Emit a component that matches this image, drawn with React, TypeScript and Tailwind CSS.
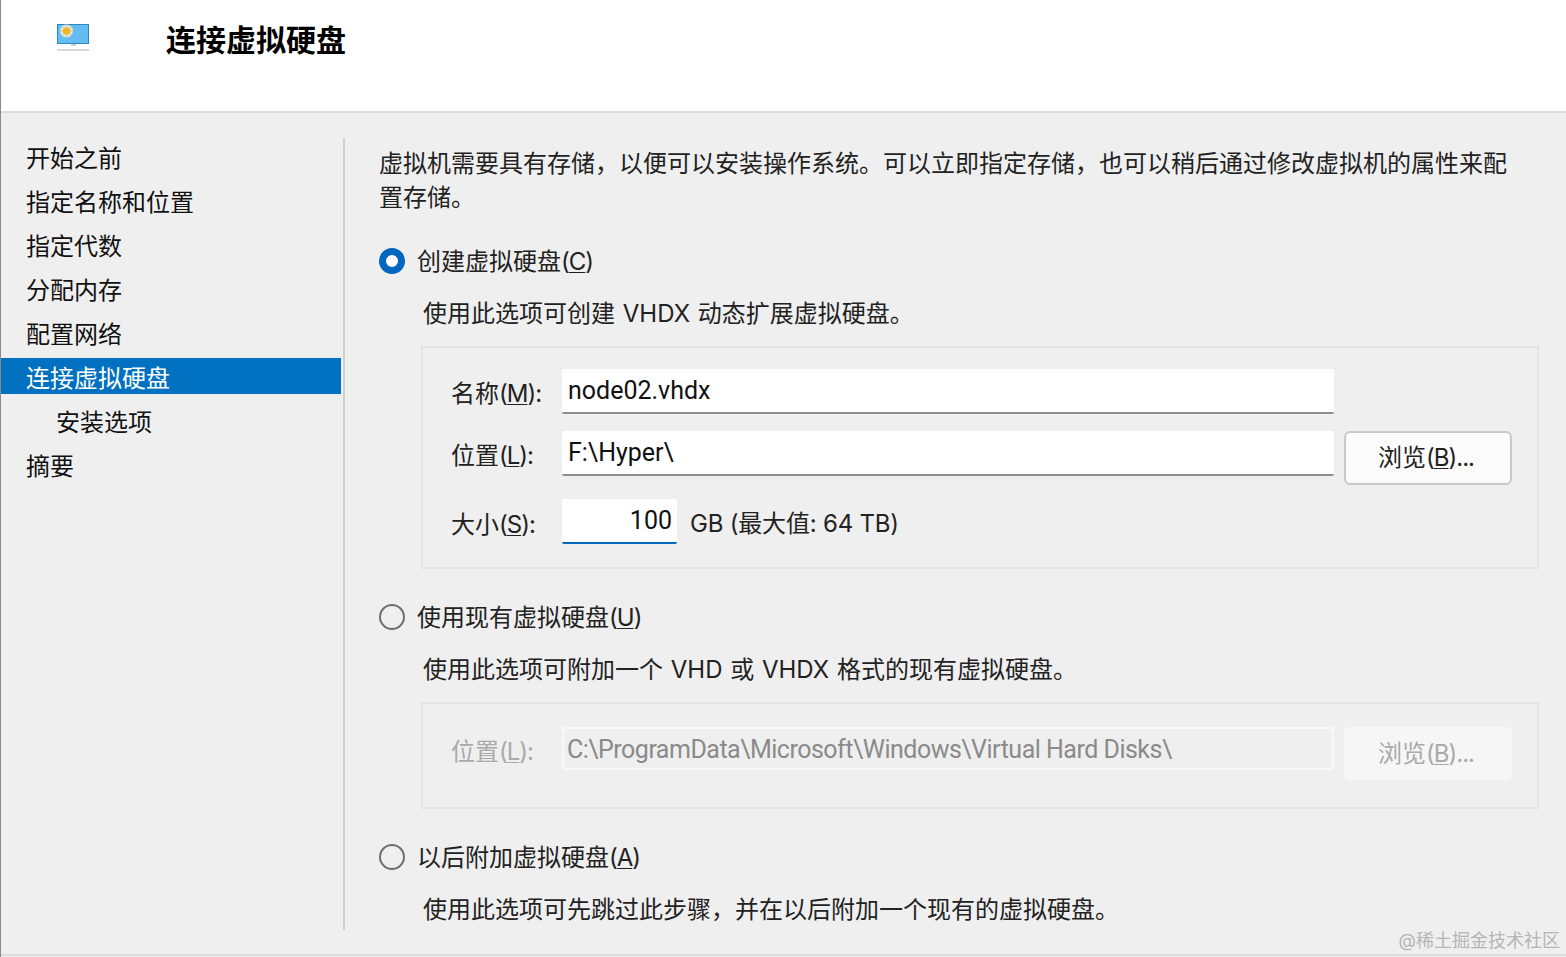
import React from "react";

const font = { fontFamily: '"Inter","Noto Sans CJK SC",sans-serif' };
const inputFont = { fontFamily: '"Roboto","Noto Sans CJK SC",sans-serif' };

function Radio({ on }: { on?: boolean }) {
  return on ? (
    <span className="block w-[26px] h-[26px] shrink-0 rounded-full border-[7px] border-[#0067c0] bg-white" />
  ) : (
    <span className="block w-[26px] h-[26px] shrink-0 rounded-full border-2 border-[#6e6e6e] bg-[#efefef]" />
  );
}

function Key({ k, suffix }: { k: string; suffix?: string }) {
  return (
    <span className="tracking-[-1px]">
      (<span className="underline underline-offset-2 decoration-1">{k}</span>){suffix}
    </span>
  );
}

function Option({ on, label, k, desc }: { on?: boolean; label: string; k: string; desc: string }) {
  return (
    <div>
      <div className="flex items-center gap-3 h-[34px]">
        <Radio on={on} />
        <span className="pt-[2px] text-[24px] leading-[34px] text-[#222]">
          {label}
          <Key k={k} />
        </span>
      </div>
      <div className="ml-[44px] mt-[18px] h-[34px] text-[24px] leading-[36px] text-[#222] whitespace-nowrap [word-spacing:1px]">{desc}</div>
    </div>
  );
}

function Browse({ disabled }: { disabled?: boolean }) {
  return (
    <div
      className={
        disabled
          ? "w-[168px] h-[53px] pr-[4px] rounded-[6px] bg-[#f6f6f6] flex items-center justify-center text-[24px] text-[#aaa]"
          : "w-[168px] h-[54px] pr-[4px] rounded-[6px] border-2 border-[#c9c9c9] bg-[#fbfbfb] flex items-center justify-center text-[24px] text-[#222]"
      }
    >
      <span>
        浏览
        <Key k="B" suffix="..." />
      </span>
    </div>
  );
}

const nav = ["开始之前", "指定名称和位置", "指定代数", "分配内存", "配置网络"];

export default function App() {
  return (
    <div style={font} className="w-[1566px] h-[957px] overflow-hidden relative bg-[#efefef] flex flex-col border-l border-[#8a8a8a]">
      <header className="h-[113px] shrink-0 bg-white border-b-2 border-[#dcdcdc] flex items-start">
        <svg className="ml-[56px] mt-[24px] shrink-0" width="33" height="28" viewBox="0 0 33 28">
          <rect x="0" y="0" width="32" height="20" fill="#2f86c5" />
          <rect x="1" y="1" width="30" height="18" fill="#63bdf2" />
          <circle cx="9.5" cy="7" r="6.5" fill="#d9e9ef" />
          <path d="M9.5 0.5v13M3 7h13M5 2.5l9 9M14 2.5l-9 9" stroke="#f2c14a" strokeWidth="1" />
          <circle cx="9.5" cy="7" r="3.6" fill="#f2b222" />
          <rect x="14" y="20" width="5" height="2" fill="#b8d4e6" />
          <rect x="0" y="25" width="32" height="2" fill="#d6d9dc" />
        </svg>
        <h1 className="ml-[76px] mt-[18px] text-[30px] leading-[44px] font-bold text-black whitespace-nowrap">连接虚拟硬盘</h1>
      </header>
      <div className="flex-1 flex items-start relative">
        <aside className="w-[340px] shrink-0 pt-[23px] text-[24px] text-[#111]">
          {nav.map((n) => (
            <div key={n} className="h-[44px] leading-[46px] pl-[25px]">{n}</div>
          ))}
          <div className="h-[36px] mt-[2px] leading-[42px] pl-[25px] bg-[#0070c0] text-white">连接虚拟硬盘</div>
          <div className="h-[44px] mt-[6px] leading-[46px] pl-[55px]">安装选项</div>
          <div className="h-[44px] leading-[46px] pl-[25px]">摘要</div>
        </aside>
        <div className="w-[2px] h-[792px] mt-[25px] ml-[2px] bg-[#cfcfcf] shrink-0" />
        <main className="ml-[34px] flex-1 pt-[34px] min-w-0">
          <p className="w-[1140px] text-[24px] leading-[34px] text-[#222]">
            虚拟机需要具有存储，以便可以安装操作系统。可以立即指定存储，也可以稍后通过修改虚拟机的属性来配置存储。
          </p>
          <div className="mt-[29px]">
            <Option on label="创建虚拟硬盘" k="C" desc="使用此选项可创建 VHDX 动态扩展虚拟硬盘。" />
          </div>
          <section className="ml-[42px] mt-[16px] w-[1118px] h-[223px] border-2 border-[#e4e4e4] pl-[28px] pt-[21px] text-[#222]">
            <div className="flex items-start">
              <span className="w-[111px] text-[24px] leading-[44px] pt-[3px] whitespace-nowrap">
                名称<Key k="M" suffix=":" />
              </span>
              <div style={inputFont} className="w-[772px] h-[45px] bg-white border-b-2 border-[#8f8f8f] rounded-[2px] pl-[6px] text-[25px] leading-[44px] text-[#111]">node02.vhdx</div>
            </div>
            <div className="flex items-start mt-[15px]">
              <span className="w-[111px] text-[24px] leading-[44px] pt-[3px] whitespace-nowrap">
                位置<Key k="L" suffix=":" />
              </span>
              <div style={inputFont} className="w-[772px] h-[45px] bg-white border-b-2 border-[#8f8f8f] rounded-[2px] pl-[6px] text-[25px] leading-[44px] text-[#111]">F:\Hyper\</div>
              <div className="ml-[10px]"><Browse /></div>
            </div>
            <div className="flex items-start mt-[14px]">
              <span className="w-[111px] text-[24px] leading-[52px] whitespace-nowrap">
                大小<Key k="S" suffix=":" />
              </span>
              <div style={inputFont} className="w-[115px] h-[45px] bg-white border-b-2 border-[#0067c0] rounded-[2px] pr-[5px] text-right text-[25px] leading-[44px] text-[#111]">100</div>
              <span className="ml-[13px] text-[24px] leading-[50px] whitespace-nowrap tracking-[-0.2px]">GB (最大值: 64 TB)</span>
            </div>
          </section>
          <div className="mt-[31px]">
            <Option label="使用现有虚拟硬盘" k="U" desc="使用此选项可附加一个 VHD 或 VHDX 格式的现有虚拟硬盘。" />
          </div>
          <section className="ml-[42px] mt-[16px] w-[1118px] h-[107px] border-2 border-[#e4e4e4] pl-[28px] pt-[23px] text-[#aaa]">
            <div className="flex items-start">
              <span className="w-[111px] text-[24px] leading-[44px] pt-[3px] whitespace-nowrap">
                位置<Key k="L" suffix=":" />
              </span>
              <div style={inputFont} className="w-[772px] h-[43px] border-2 border-[#f8f8f8] rounded-[2px] pl-[3px] text-[25px] leading-[42px] tracking-[-0.5px] text-[#8a8a8a] whitespace-nowrap">C:\ProgramData\Microsoft\Windows\Virtual Hard Disks\</div>
              <div className="ml-[10px]"><Browse disabled /></div>
            </div>
          </section>
          <div className="mt-[31px]">
            <Option label="以后附加虚拟硬盘" k="A" desc="使用此选项可先跳过此步骤，并在以后附加一个现有的虚拟硬盘。" />
          </div>
        </main>
        <div className="absolute right-[6px] bottom-[4px] text-[18px] leading-[24px] text-[#b5b5b5]">@稀土掘金技术社区</div>
        <div className="absolute left-0 right-0 bottom-[1px] h-[2px] bg-[#dcdcdc]" />
      </div>
    </div>
  );
}
